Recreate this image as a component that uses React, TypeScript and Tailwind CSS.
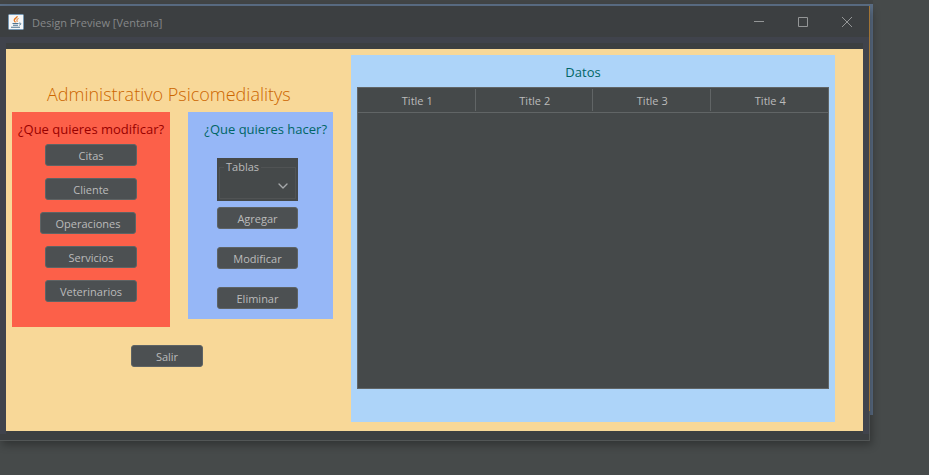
import type { ReactNode } from 'react';
import { ChevronDown } from 'lucide-react';

const tables = ['Citas', 'Cliente', 'Operaciones', 'Servicios', 'Veterinarios'];
const actions = ['Agregar', 'Modificar', 'Eliminar'];
const columns = ['Title 1', 'Title 2', 'Title 3', 'Title 4'];

function Button({ className, children }: { className: string; children: ReactNode }) {
  return (
    <button
      type="button"
      className={`h-[22px] rounded-[3px] border border-[#5e6364] bg-[#4c5052] pt-0.5 text-[11px] leading-[18px] text-[#bbbbbb] ${className}`}
    >
      {children}
    </button>
  );
}

function JavaIcon() {
  return (
    <svg className="size-4 shrink-0" viewBox="0 0 16 16" fill="none" aria-hidden="true">
      <rect x="0.5" y="0.5" width="15" height="15" rx="1" fill="#f4f6f7" stroke="#7699b5" />
      <path d="M9.200 2.200c.3 1.600-3 2.200-3 4 0 .9.800 1.300 1.300 2.100" stroke="#e8761c" strokeWidth="1.300" />
      <path d="M10.500 4.600c-1.500.6-2.200 1.200-1.500 2 .4.500.2 1-.3 1.500" stroke="#e8761c" />
      <path d="M4.500 9.500h6M5 11.300h5M3 13.300h9" stroke="#4d7592" strokeWidth="1.100" />
      <path d="M11 9.200c2.400-.5 2.600 1.400.2 2" stroke="#4d7592" />
    </svg>
  );
}

function TitleBar() {
  return (
    <header className="flex h-[31px] items-center bg-[#3c3f41] pr-4 pl-2">
      <JavaIcon />
      <h1 className="ml-2 flex-1 pt-0.5 text-[11px] leading-4 text-[#868889]">Design Preview [Ventana]</h1>
      <div className="flex gap-8 text-[#949697]">
        <button type="button" aria-label="Minimizar">
          <svg className="h-3 w-3" viewBox="0 0 12 12" stroke="currentColor"><path d="M1 5.500h10" /></svg>
        </button>
        <button type="button" aria-label="Maximizar">
          <svg className="h-3 w-3" viewBox="0 0 12 12" fill="none" stroke="currentColor"><path d="M1.500 1.500h9v9h-9z" /></svg>
        </button>
        <button type="button" aria-label="Cerrar">
          <svg className="h-3 w-3" viewBox="0 0 12 12" stroke="currentColor"><path d="M1 1l10 10M11 1L1 11" /></svg>
        </button>
      </div>
    </header>
  );
}

function ModifyPanel() {
  return (
    <section className="flex w-[158px] flex-col items-center bg-[#fc6049] pt-[7px] pb-[25px]">
      <h3 className="mb-[5px] text-[13px] leading-5 whitespace-nowrap text-[#990000]">¿Que quieres modificar?</h3>
      <div className="flex flex-col items-center gap-3">
        {tables.map((name) => (
          <Button key={name} className={name === 'Operaciones' ? 'mr-1.5 w-24' : 'w-[92px]'}>
            {name}
          </Button>
        ))}
      </div>
    </section>
  );
}

function ActionPanel() {
  return (
    <section className="w-[145px] bg-[#96b7f7] pt-[7px] pb-2.5">
      <h3 className="pr-1.5 text-right text-[13px] leading-5 whitespace-nowrap text-[#006666]">¿Que quieres hacer?</h3>
      <div className="mt-[19px] ml-[29px] w-[81px]">
        <div className="h-[43px] bg-[#45494a] px-0.5 pt-0.5">
          <fieldset className="h-[39px] border border-[#505354] px-1">
            <legend className="px-0.5 text-[11px] leading-[14px] text-[#bbbbbb]">
              <label htmlFor="tablas">Tablas</label>
            </legend>
            <div className="grid items-center justify-items-end">
              <select id="tablas" className="col-start-1 row-start-1 h-6 w-full appearance-none bg-transparent text-[11px] text-[#bbbbbb]">
                <option value="" />
                {tables.map((name) => (
                  <option key={name}>{name}</option>
                ))}
              </select>
              <ChevronDown className="pointer-events-none col-start-1 row-start-1 size-4 text-[#a6a9ab]" strokeWidth={2} />
            </div>
          </fieldset>
        </div>
        <div className="mt-1.5 flex flex-col gap-[18px]">
          {actions.map((name) => (
            <Button key={name} className="w-full">
              {name}
            </Button>
          ))}
        </div>
      </div>
    </section>
  );
}

function DataPanel() {
  return (
    <section className="mt-1.5 mr-7 mb-[9px] flex flex-1 flex-col bg-[#add4f9] px-1.5 pt-[7px] pb-[33px]">
      <h3 className="mb-[5px] pr-5 text-center text-[13px] leading-5 text-[#006666]">Datos</h3>
      <div className="min-h-[302px] flex-1 border border-[#616566] bg-[#45494a]">
        <table className="w-full table-fixed border-separate border-spacing-0">
          <thead>
            <tr>
              {columns.map((title) => (
                <th key={title} scope="col" className="group border-b border-[#616566] py-px text-[11px] font-normal text-[#bbbbbb]">
                  <div className="h-[22px] border-r border-[#616566] pt-px pl-0.5 leading-[22px] group-last:border-r-0">{title}</div>
                </th>
              ))}
            </tr>
          </thead>
        </table>
      </div>
    </section>
  );
}

export default function App() {
  return (
    <div className="min-h-screen bg-[#464a4a] pr-14 pb-[34px] font-['Open_Sans','Noto_Sans',sans-serif]">
      <div className="h-1 bg-[#424546]" />
      <div className="relative pt-0.5 pr-[3px]">
        <div className="absolute inset-x-0 top-0 bottom-[26px] bg-[#5b6e85]" />
        <main className="relative border-b border-[#525656] bg-[#3c3f41] pb-1.5 shadow-[2px_4px_8px_rgba(0,0,0,0.3)]">
          <div className="absolute top-0 right-0 bottom-0 w-px bg-[#525656]" />
          <div className="absolute top-0 right-0 bottom-[29px] w-px bg-[#a17436]" />
          <div className="mr-px">
            <TitleBar />
            <div className="bg-[#40434c] px-1.5 pt-1.5">
              <div className="bg-[#3c3f41] pt-1.5 pb-[3px]">
                <div className="flex bg-[#f8d898]">
                  <div className="w-[345px] shrink-0 pl-1.5">
                    <h2 className="mt-[33px] mb-1.5 pl-[35px] text-lg leading-6 font-light whitespace-nowrap text-[#cc6600]">
                      Administrativo Psicomedialitys
                    </h2>
                    <div className="flex items-start gap-[18px]">
                      <ModifyPanel />
                      <ActionPanel />
                    </div>
                    <Button className="mt-[18px] ml-[119px] w-[72px]">Salir</Button>
                  </div>
                  <DataPanel />
                </div>
              </div>
            </div>
          </div>
        </main>
      </div>
    </div>
  );
}
